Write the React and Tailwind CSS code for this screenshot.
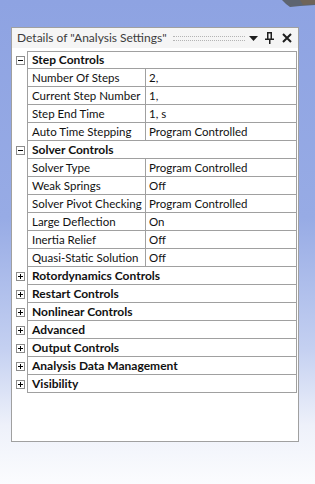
import React from 'react';

const groups = [
  {
    name: 'Step Controls',
    open: true,
    rows: [
      ['Number Of Steps', '2,'],
      ['Current Step Number', '1,'],
      ['Step End Time', '1, s'],
      ['Auto Time Stepping', 'Program Controlled'],
    ],
  },
  {
    name: 'Solver Controls',
    open: true,
    rows: [
      ['Solver Type', 'Program Controlled'],
      ['Weak Springs', 'Off'],
      ['Solver Pivot Checking', 'Program Controlled'],
      ['Large Deflection', 'On'],
      ['Inertia Relief', 'Off'],
      ['Quasi-Static Solution', 'Off'],
    ],
  },
  { name: 'Rotordynamics Controls' },
  { name: 'Restart Controls' },
  { name: 'Nonlinear Controls' },
  { name: 'Advanced' },
  { name: 'Output Controls' },
  { name: 'Analysis Data Management' },
  { name: 'Visibility' },
];

const Toggle = ({ open }) => (
  <div className="ml-[4px] flex h-[9px] w-[9px] items-center justify-center border border-[#8c8c8c] bg-white">
    <svg width="7" height="7" viewBox="0 0 7 7">
      <rect x="1" y="3" width="5" height="1" fill="#000" />
      {!open && <rect x="3" y="1" width="1" height="5" fill="#000" />}
    </svg>
  </div>
);

const GroupRow = ({ name, open, first }) => (
  <div className="flex h-[18px]">
    <div className="flex w-[15px] items-center">
      <Toggle open={open} />
    </div>
    <div
      className={`flex flex-1 items-center border-x border-b border-[#a0a0a0] pl-[4px] text-[12px] font-bold ${first ? 'border-t' : ''}`}
    >
      {name}
    </div>
  </div>
);

const PropRow = ({ label, value }) => (
  <div className="flex h-[18px]">
    <div className="w-[15px]" />
    <div className="flex flex-1 border-x border-b border-[#a0a0a0]">
      <div className="flex w-[118px] items-center border-r border-[#a0a0a0] pl-[4px] whitespace-nowrap">
        {label}
      </div>
      <div className="flex flex-1 items-center pl-[3px] whitespace-nowrap">{value}</div>
    </div>
  </div>
);

const App = () => {
  return (
    <div
      className="relative h-[484px] w-[315px] overflow-hidden bg-[linear-gradient(180deg,#8ea3e2_0%,#97abe5_45%,#c4d0f1_72%,#eef1fa_88%,#fbfcfe_100%)] pl-[11px] pt-[27px]"
      style={{ fontFamily: 'Lato, "Open Sans", sans-serif' }}
    >
      {/* model edge peeking in at the top right */}
      <svg className="absolute right-0 top-0" width="45" height="8" viewBox="0 0 45 8">
        <polygon points="12,0 45,0 45,5 30,6 20,7 16,4" fill="#5d6470" />
        <polygon points="30,0 45,0 45,4 33,5" fill="#6f6458" />
      </svg>

      <div className="flex h-[415px] w-[288px] flex-col border border-[#a0a0a0] bg-white">
        <div className="flex h-[20px] items-center bg-[#f5f5f5] pl-[5px] pr-[6px] text-[12px] text-[#3c3c3c]">
          <span className="whitespace-nowrap">Details of "Analysis Settings"</span>
          <div className="ml-[6px] h-[5px] flex-1 border-y border-dotted border-[#b4b4b4]" />
          <svg className="ml-[4px]" width="9" height="6" viewBox="0 0 9 6">
            <polygon points="0,1 9,1 4.5,6" fill="#1e1e1e" />
          </svg>
          <svg className="ml-[7px]" width="9" height="12" viewBox="0 0 9 12">
            <rect x="2" y="0" width="5" height="1.5" fill="#1e1e1e" />
            <rect x="2" y="0" width="1.5" height="7" fill="#1e1e1e" />
            <rect x="5.5" y="0" width="1.5" height="7" fill="#1e1e1e" />
            <rect x="0" y="6.5" width="9" height="1.5" fill="#1e1e1e" />
            <rect x="4" y="7" width="1.5" height="5" fill="#1e1e1e" />
          </svg>
          <svg className="ml-[8px]" width="10" height="10" viewBox="0 0 10 10">
            <path d="M1 1 L9 9 M9 1 L1 9" stroke="#1e1e1e" strokeWidth="2" />
          </svg>
        </div>

        <div className="mt-[3px] w-[285px] text-[11.5px] text-[#111]">
          {groups.map((g, i) => (
            <React.Fragment key={g.name}>
              <GroupRow name={g.name} open={g.open} first={i === 0} />
              {g.open && g.rows.map(([l, v]) => <PropRow key={l} label={l} value={v} />)}
            </React.Fragment>
          ))}
        </div>
      </div>
    </div>
  );
};

export default App;
